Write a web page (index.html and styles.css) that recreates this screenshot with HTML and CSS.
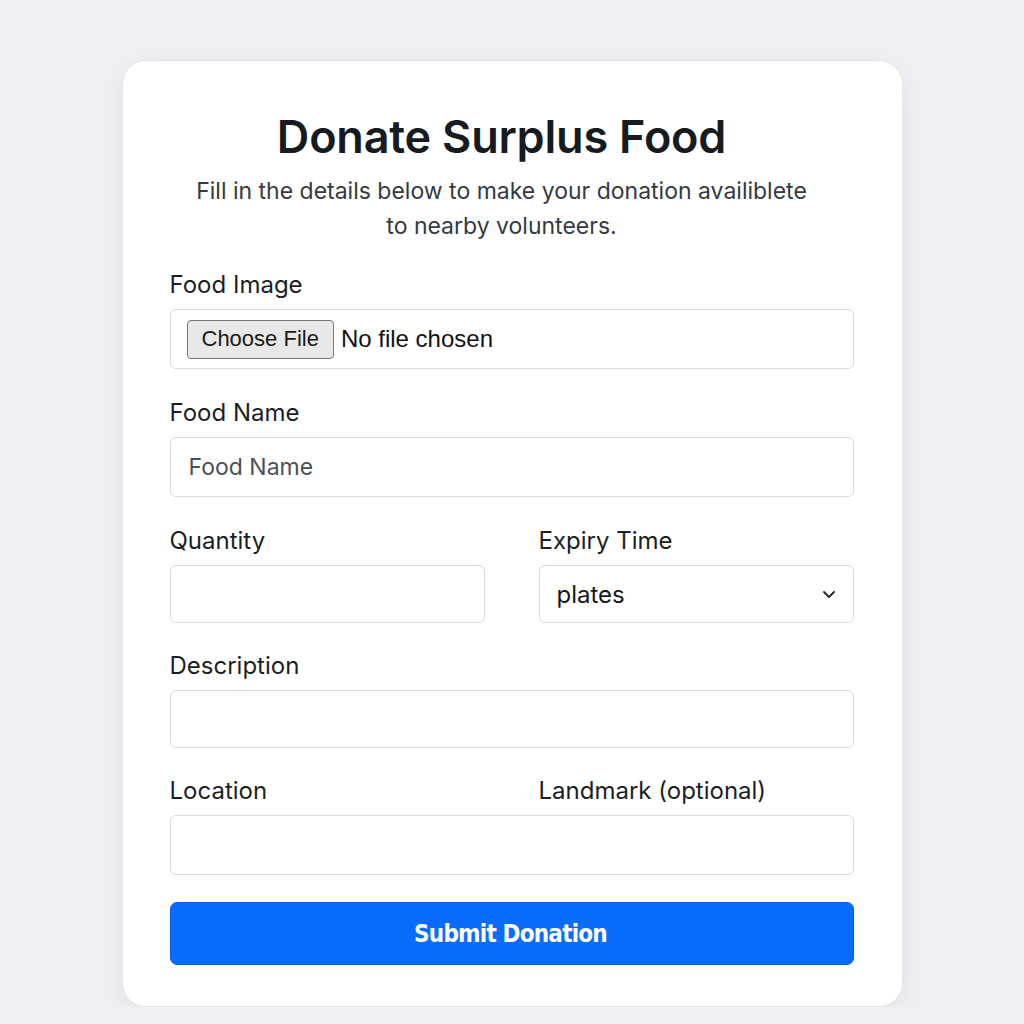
FILE: index.html
```html
<!DOCTYPE html>
<html lang="en">
<head>
<meta charset="utf-8">
<title>Donate Surplus Food</title>
<link rel="stylesheet" href="styles.css">
</head>
<body>
<main class="page">
  <section class="card">
    <header class="head">
      <h1 class="title">Donate Surplus Food</h1>
      <p class="subtitle">Fill in the details below to make your donation availiblete to nearby volunteers.</p>
    </header>
    <form class="form">
      <div class="field">
        <label class="label">Food Image</label>
        <div class="control file-control">
          <span class="file-btn">Choose File</span>
          <span class="file-text">No file chosen</span>
        </div>
      </div>
      <div class="field nudge">
        <label class="label">Food Name</label>
        <input class="control text-input" type="text" placeholder="Food Name">
      </div>
      <div class="row nudge">
        <div class="field">
          <label class="label">Quantity</label>
          <input class="control text-input short" type="text">
        </div>
        <div class="field">
          <label class="label">Expiry Time</label>
          <div class="control select-control short">
            <span class="select-text">plates</span>
            <svg class="chevron" width="14" height="9" viewBox="0 0 14 9"><path d="M2 2l5 5 5-5" fill="none" stroke="#222" stroke-width="1.8" stroke-linecap="round" stroke-linejoin="round"/></svg>
          </div>
        </div>
      </div>
      <div class="field">
        <label class="label">Description</label>
        <input class="control text-input short" type="text">
      </div>
      <div class="field">
        <div class="row">
          <label class="label">Location</label>
          <label class="label">Landmark (optional)</label>
        </div>
        <input class="control text-input" type="text">
      </div>
      <button class="submit" type="button">Submit Donation</button>
    </form>
  </section>
</main>
</body>
</html>
```
FILE: styles.css
```css
* { box-sizing: border-box; }
html, body { margin: 0; padding: 0; }
body {
  background: #eff0f3;
  font-family: Inter, "Liberation Sans", sans-serif;
  color: #1c2126;
}
.page {
  display: flex;
  justify-content: center;
  padding-top: 60px;
}
.card {
  width: 781px;
  background: #ffffff;
  border-radius: 24px;
  border: 1px solid #e3e5e9;
  box-shadow: 0 8px 30px rgba(30, 40, 60, 0.06);
  padding: 48px 48px 41px 47px;
  display: flex;
  flex-direction: column;
  align-items: stretch;
}
.head {
  padding-right: 20px;
  display: flex;
  flex-direction: column;
  align-items: center;
}
.title {
  margin: 0;
  text-align: center;
  font-size: 45px;
  line-height: 56px;
  font-weight: 600;
  color: #161b21;
  letter-spacing: -0.2px;
}
.subtitle {
  margin: 9px auto 0;
  max-width: 625px;
  text-align: center;
  font-size: 23px;
  line-height: 35px;
  color: #343a41;
}
.form {
  margin-top: 26px;
  display: flex;
  flex-direction: column;
  gap: 28px;
}
.nudge { margin-top: 1px; }
.field {
  display: flex;
  flex-direction: column;
  gap: 9px;
}
.row {
  display: grid;
  grid-template-columns: 1fr 1fr;
  column-gap: 54px;
}
.label {
  font-size: 24px;
  line-height: 30px;
  font-weight: 400;
  color: #1b1f24;
}
.control {
  height: 60px;
  border: 1px solid #cfdde2;
  border-radius: 6px;
  background: #fff;
  width: 100%;
}
.control.short { height: 58px; }
.text-input {
  padding: 0 18px;
  font-family: Inter, "Liberation Sans", sans-serif;
  font-size: 23px;
  color: #1c2126;
  outline: none;
}
.text-input::placeholder { color: #4a5057; }
.file-control {
  display: flex;
  align-items: center;
  padding: 0 16px;
  gap: 7px;
}
.file-btn {
  height: 39px;
  padding: 0 14px;
  display: flex;
  align-items: center;
  background: #e8e8e9;
  border: 1px solid #767676;
  border-radius: 4px;
  font-family: "Liberation Sans", Arial, sans-serif;
  font-size: 22px;
  color: #1a1a1a;
}
.file-text {
  font-family: "Liberation Sans", Arial, sans-serif;
  font-size: 24px;
  color: #111;
}
.select-control {
  display: flex;
  align-items: center;
  justify-content: space-between;
  padding: 0 17px;
}
.select-text {
  font-size: 24px;
  color: #15191d;
}
.chevron { display: block; }
.submit {
  margin-top: -1px;
  height: 63px;
  width: 100%;
  border: 1px solid #0a62e0;
  border-radius: 7px;
  background: #0a6cfd;
  color: #ffffff;
  font-family: "DejaVu Sans", sans-serif;
  font-stretch: condensed;
  font-size: 24px;
  font-weight: 600;
  letter-spacing: -0.8px;
  padding-right: 8px;
  cursor: pointer;
}
```
